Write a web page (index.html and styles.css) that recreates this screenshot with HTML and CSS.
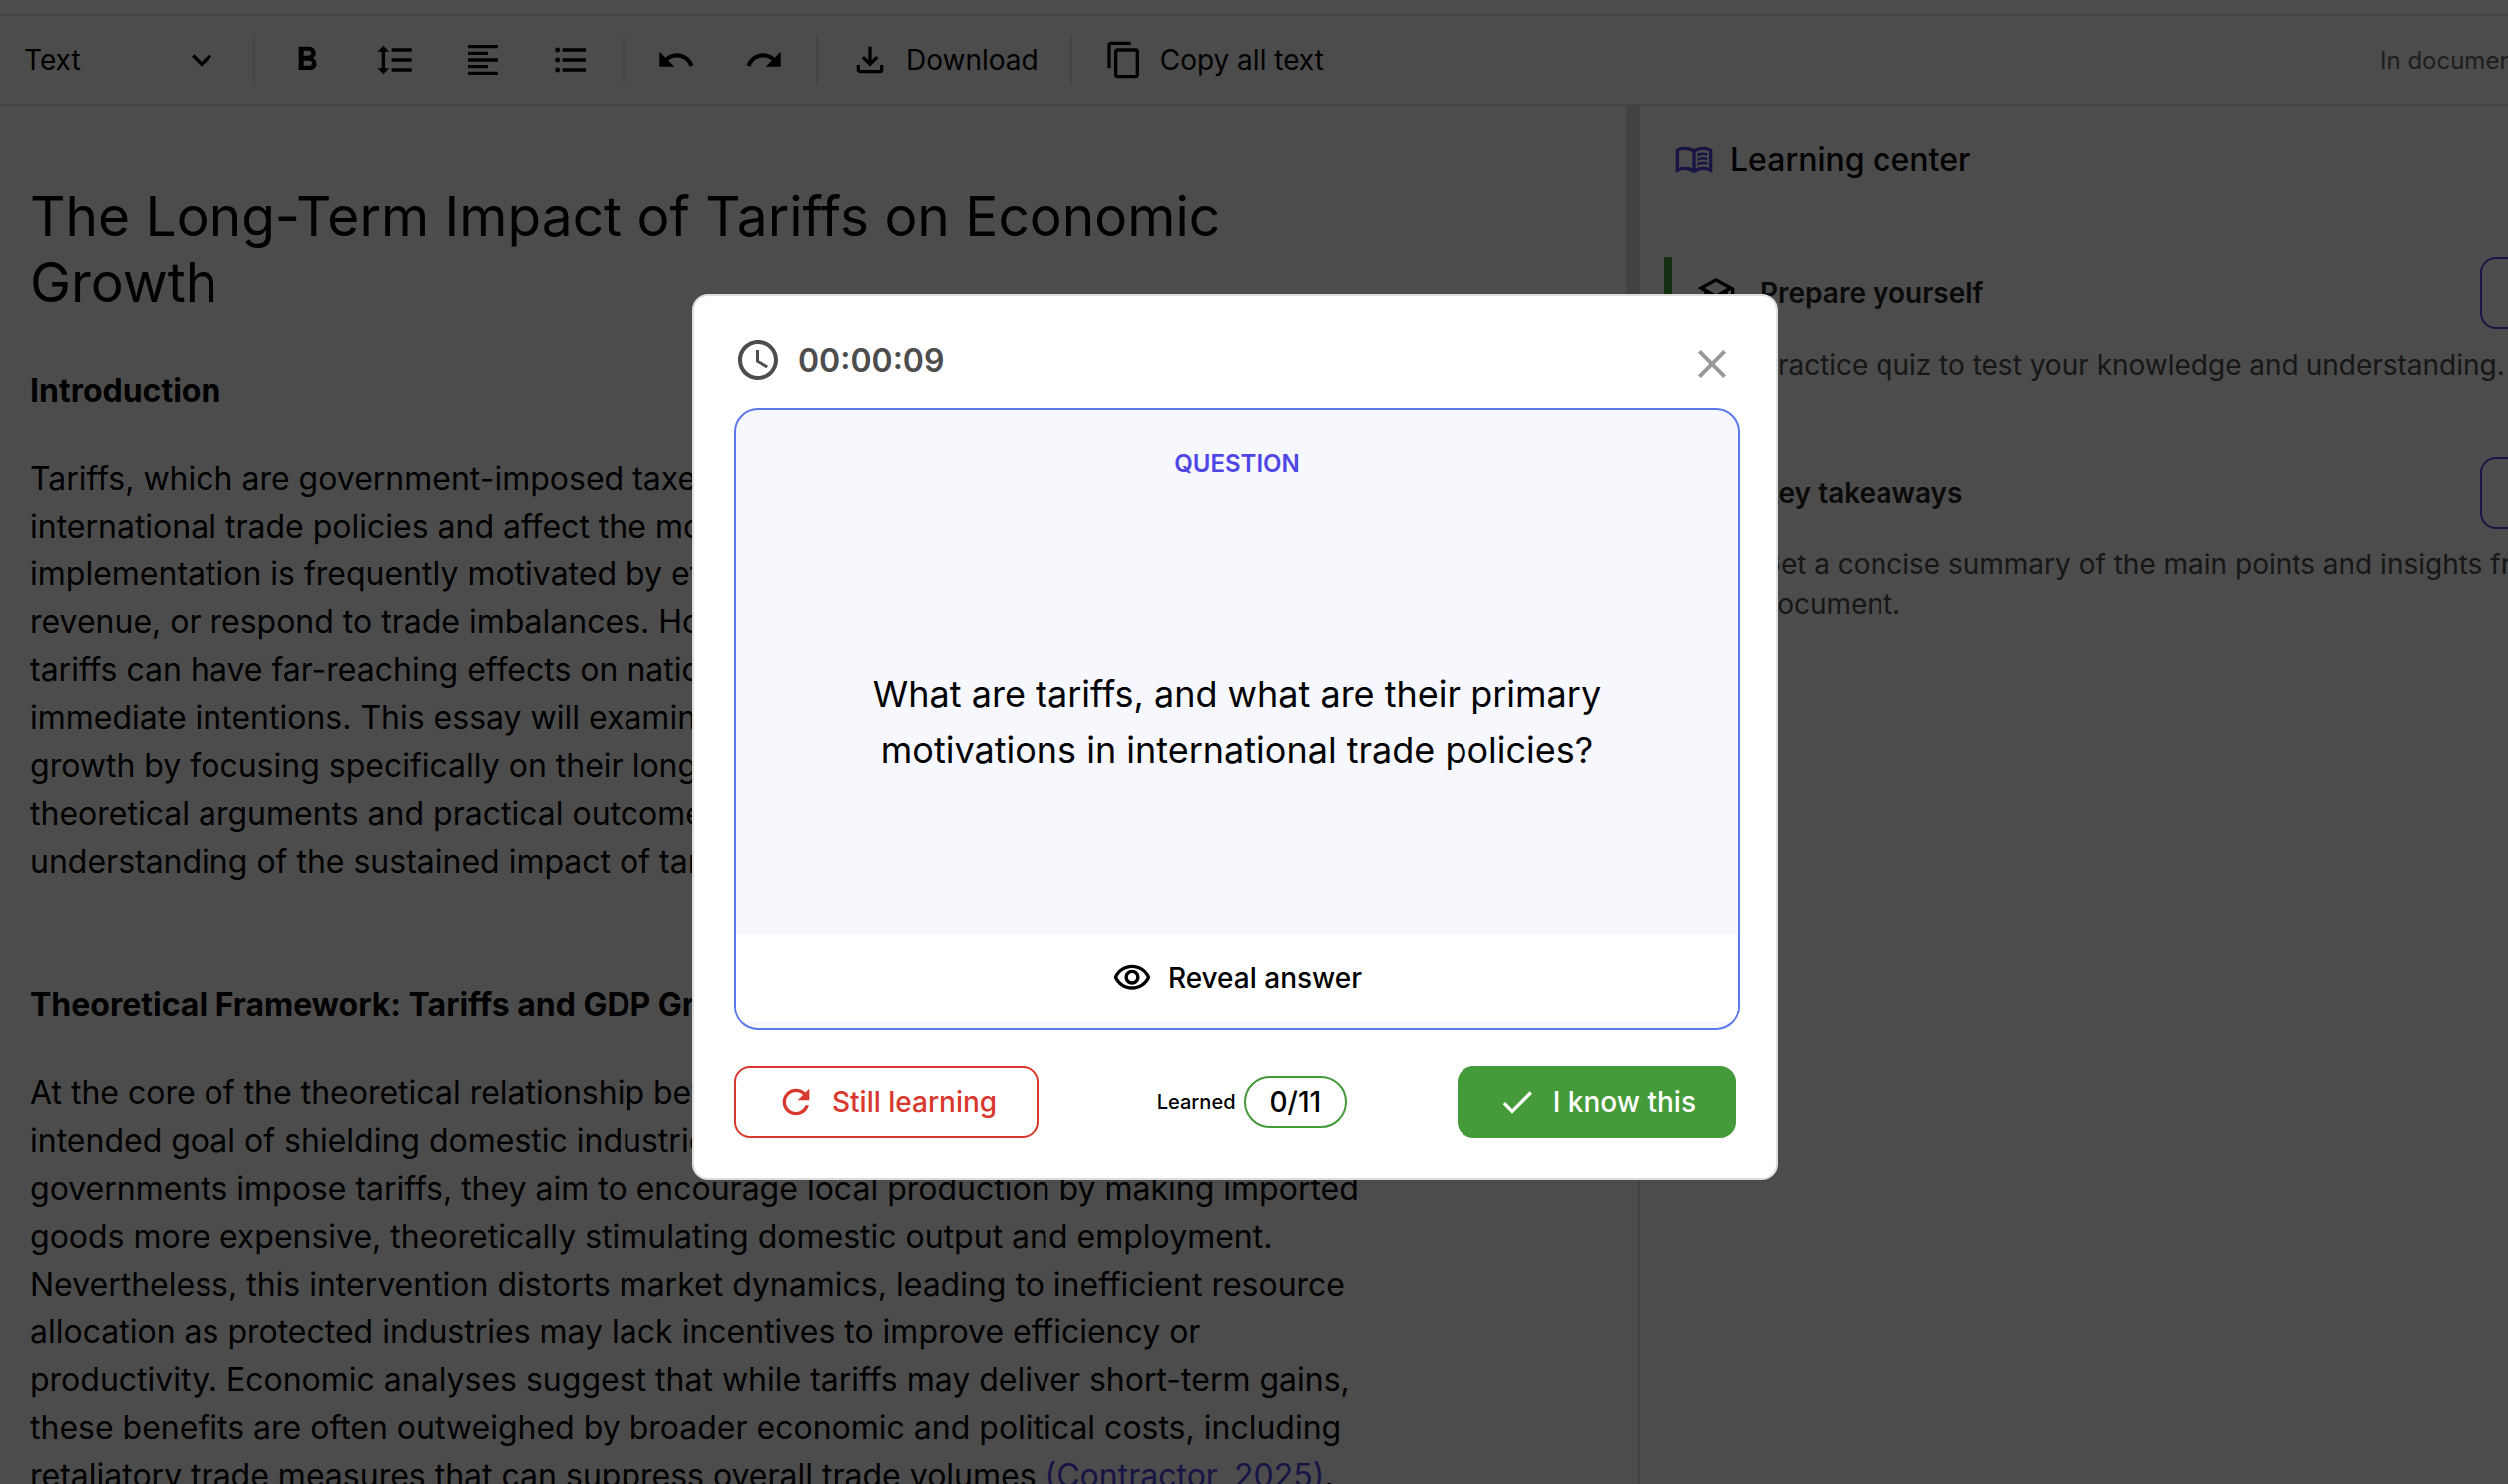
FILE: index.html
```
<!DOCTYPE html>
<html lang="en">
<head>
    <meta charset="UTF-8">
    <meta name="viewport" content="width=device-width, initial-scale=1.0">
    <title>Flashcards</title>
    <link rel="stylesheet" href="styles.css">
</head>
<body>

    <header class="toolbar">
        <div class="style-picker">
            <select aria-label="Text style">
                <option>Text</option>
                <option>Heading</option>
            </select>
            <svg class="icon" viewBox="0 0 24 24"><path d="M16.59 8.59 12 13.17 7.41 8.59 6 10l6 6 6-6z"/></svg>
        </div>
        <span class="separator"></span>
        <button class="tool" aria-label="Bold">
            <svg class="icon" viewBox="0 0 24 24"><path d="M15.6 10.79c.97-.67 1.65-1.77 1.65-2.79 0-2.26-1.75-4-4-4H7v14h7.04c2.09 0 3.71-1.7 3.71-3.79 0-1.52-.86-2.82-2.15-3.42zM10 6.5h3c.83 0 1.5.67 1.5 1.5s-.67 1.5-1.5 1.5h-3v-3zm3.5 9H10v-3h3.5c.83 0 1.5.67 1.5 1.5s-.67 1.5-1.5 1.5z"/></svg>
        </button>
        <button class="tool" aria-label="Line spacing">
            <svg class="icon" viewBox="0 0 24 24"><path d="M6 7h2.5L5 3.5 1.5 7H4v10H1.5L5 20.5 8.5 17H6V7zm4-2v2h12V5H10zm0 14h12v-2H10v2zm0-6h12v-2H10v2z"/></svg>
        </button>
        <button class="tool" aria-label="Align left">
            <svg class="icon" viewBox="0 0 24 24"><path d="M15 15H3v2h12v-2zm0-8H3v2h12V7zM3 13h18v-2H3v2zm0 8h18v-2H3v2zM3 3v2h18V3H3z"/></svg>
        </button>
        <button class="tool" aria-label="Bulleted list">
            <svg class="icon" viewBox="0 0 24 24"><path d="M4 10.5c-.83 0-1.5.67-1.5 1.5s.67 1.5 1.5 1.5 1.5-.67 1.5-1.5-.67-1.5-1.5-1.5zm0-6c-.83 0-1.5.67-1.5 1.5S3.17 7.5 4 7.5 5.5 6.83 5.5 6 4.83 4.5 4 4.5zm0 12c-.83 0-1.5.68-1.5 1.5s.68 1.5 1.5 1.5 1.5-.68 1.5-1.5-.67-1.5-1.5-1.5zM7 19h14v-2H7v2zm0-6h14v-2H7v2zm0-8v2h14V5H7z"/></svg>
        </button>
        <span class="separator"></span>
        <button class="tool" aria-label="Undo">
            <svg class="icon" viewBox="0 0 24 24"><path d="M12.5 8c-2.65 0-5.05.99-6.9 2.6L2 7v9h9l-3.62-3.62c1.39-1.16 3.16-1.88 5.12-1.88 3.54 0 6.55 2.31 7.6 5.5l2.37-.78C21.08 11.03 17.15 8 12.5 8z"/></svg>
        </button>
        <button class="tool" aria-label="Redo">
            <svg class="icon" viewBox="0 0 24 24"><path d="M18.4 10.6C16.55 8.99 14.15 8 11.5 8c-4.65 0-8.58 3.03-9.96 7.22L3.9 16c1.05-3.19 4.05-5.5 7.6-5.5 1.95 0 3.73.72 5.12 1.88L13 16h9V7l-3.6 3.6z"/></svg>
        </button>
        <span class="separator"></span>
        <button class="tool">
            <svg class="icon" viewBox="0 -960 960 960"><path d="M480-320 280-520l56-58 104 104v-326h80v326l104-104 56 58-200 200ZM240-160q-33 0-56.5-23.5T160-240v-120h80v120h480v-120h80v120q0 33-23.5 56.5T720-160H240Z"/></svg>
            Download
        </button>
        <span class="separator"></span>
        <button class="tool">
            <svg class="icon" viewBox="0 0 24 24"><path d="M16 1H4c-1.1 0-2 .9-2 2v14h2V3h12V1zm3 4H8c-1.1 0-2 .9-2 2v14c0 1.1.9 2 2 2h11c1.1 0 2-.9 2-2V7c0-1.1-.9-2-2-2zm0 16H8V7h11v14z"/></svg>
            Copy all text
        </button>
        <span class="in-document">In document</span>
    </header>

    <div class="workspace">
        <main class="document">
            <h1>The Long-Term Impact of Tariffs on Economic<br>Growth</h1>
            <h2>Introduction</h2>
            <p>
                Tariffs, which are government-imposed taxes on imported goods, shape<br>
                international trade policies and affect the movement of goods. Their<br>
                implementation is frequently motivated by efforts to protect, raise<br>
                revenue, or respond to trade imbalances. However, the outcomes of<br>
                tariffs can have far-reaching effects on national economies beyond<br>
                immediate intentions. This essay will examine tariffs and economic<br>
                growth by focusing specifically on their long-term effects through<br>
                theoretical arguments and practical outcomes, giving a broader<br>
                understanding of the sustained impact of tariffs.
            </p>
            <h2>Theoretical Framework: Tariffs and GDP Growth</h2>
            <p>
                At the core of the theoretical relationship between tariffs is the<br>
                intended goal of shielding domestic industries from competition. When<br>
                governments impose tariffs, they aim to encourage local production by making imported<br>
                goods more expensive, theoretically stimulating domestic output and employment.<br>
                Nevertheless, this intervention distorts market dynamics, leading to inefficient resource<br>
                allocation as protected industries may lack incentives to improve efficiency or<br>
                productivity. Economic analyses suggest that while tariffs may deliver short-term gains,<br>
                these benefits are often outweighed by broader economic and political costs, including<br>
                retaliatory trade measures that can suppress overall trade volumes <a href="#">(Contractor, 2025)</a>.
            </p>
        </main>
        <div class="scrollbar"><div class="thumb"></div></div>

        <aside class="sidebar">
            <h2 class="sidebar-title">
                <svg class="icon" viewBox="0 -960 960 960"><path d="M560-564v-68q33-14 67.5-21t72.5-7q26 0 51 4t49 10v64q-24-9-48.5-13.5T700-600q-38 0-73 9.5T560-564Zm0 220v-68q33-14 67.5-21t72.5-7q26 0 51 4t49 10v64q-24-9-48.5-13.5T700-380q-38 0-73 9t-67 27Zm0-110v-68q33-14 67.5-21t72.5-7q26 0 51 4t49 10v64q-24-9-48.5-13.5T700-490q-38 0-73 9.5T560-454ZM260-320q47 0 91.5 10.5T440-278v-394q-41-24-87-36t-93-12q-36 0-71.5 7T120-692v396q35-12 69.5-18t70.5-6Zm260 42q44-21 88.5-31.5T700-320q36 0 70.5 6t69.5 18v-396q-33-14-68.5-21t-71.5-7q-47 0-93 12t-87 36v394Zm-40 118q-48-38-104-59t-116-21q-60 0-116 20T40-166v-550q0-11 5.5-21T62-752q46-24 96-36t102-12q58 0 113.5 15T480-740q51-30 106.500-45T700-800q52 0 102 12t96 36q11 5 16.5 15t5.5 21v550q-48-34-104-54t-116-20q-60 0-116 21t-104 59Z"/></svg>
                Learning center
            </h2>
            <section class="lesson active">
                <div class="lesson-head">
                    <svg class="icon" viewBox="0 0 24 24"><path d="M12 3 1 9l4 2.18v6L12 21l7-3.82v-6l2-1.09V17h2V9L12 3zm6.82 6L12 12.72 5.18 9 12 5.28 18.82 9zM17 15.99l-5 2.73-5-2.73v-3.72L12 15l5-2.73v3.72z"/></svg>
                    <h3>Prepare yourself</h3>
                    <button class="start">Start</button>
                </div>
                <p>Practice quiz to test your knowledge and understanding.</p>
            </section>
            <section class="lesson">
                <div class="lesson-head">
                    <svg class="icon" viewBox="0 0 24 24"><path d="M4 5h16v2H4zm0 6h16v2H4zm0 6h10v2H4z"/></svg>
                    <h3>Key takeaways</h3>
                    <button class="start">Start</button>
                </div>
                <p>Get a concise summary of the main points and insights from your<br>document.</p>
            </section>
        </aside>
    </div>

    <div class="overlay">
        <div class="modal" role="dialog" aria-label="Flashcards">
            <div class="timer">
                <svg viewBox="0 0 24 24"><path d="M11.99 2C6.47 2 2 6.48 2 12s4.47 10 9.99 10C17.52 22 22 17.52 22 12S17.52 2 11.99 2zM12 20c-4.42 0-8-3.58-8-8s3.58-8 8-8 8 3.58 8 8-3.58 8-8 8zm.5-13H11v6l5.25 3.15.75-1.23-4.5-2.67z"/></svg>
                00:00:09
            </div>
            <button class="close" aria-label="Close">
                <svg viewBox="0 0 24 24"><path d="M19 6.41 17.59 5 12 10.59 6.41 5 5 6.41 10.59 12 5 17.59 6.41 19 12 13.41 17.59 19 19 17.59 13.41 12z"/></svg>
            </button>

            <div class="card">
                <span class="card-label">QUESTION</span>
                <p class="question">What are tariffs, and what are their primary motivations in international trade policies?</p>
                <button class="reveal">
                    <svg class="icon" viewBox="0 0 24 24"><path d="M12 6c3.79 0 7.17 2.13 8.82 5.5C19.17 14.87 15.79 17 12 17s-7.17-2.13-8.82-5.5C4.83 8.13 8.21 6 12 6m0-2C7 4 2.73 7.11 1 11.5 2.73 15.89 7 19 12 19s9.27-3.11 11-7.5C21.27 7.11 17 4 12 4zm0 5c1.38 0 2.5 1.12 2.5 2.5S13.38 14 12 14s-2.5-1.12-2.5-2.5S10.62 9 12 9m0-2c-2.48 0-4.5 2.02-4.5 4.5S9.52 16 12 16s4.5-2.02 4.5-4.5S14.48 7 12 7z"/></svg>
                    Reveal answer
                </button>
            </div>

            <div class="actions">
                <button class="btn btn-red">
                    <svg class="icon" viewBox="0 0 24 24"><path d="M17.65 6.35C16.2 4.9 14.21 4 12 4c-4.42 0-7.99 3.58-7.99 8s3.57 8 7.99 8c3.73 0 6.84-2.55 7.73-6h-2.08c-.82 2.33-3.04 4-5.65 4-3.31 0-6-2.69-6-6s2.69-6 6-6c1.66 0 3.14.69 4.22 1.78L13 11h7V4l-2.35 2.35z"/></svg>
                    Still learning
                </button>
                <div class="progress">Learned <span class="count">0/11</span></div>
                <button class="btn btn-green">
                    <svg class="icon" viewBox="0 0 24 24"><path d="M9 16.17 4.83 12l-1.42 1.41L9 19 21 7l-1.41-1.41z"/></svg>
                    I know this
                </button>
            </div>
        </div>
    </div>

</body>
</html>
```
FILE: styles.css
```
* {
    box-sizing: border-box;
}
body {
    font-family: Inter, 'Liberation Sans', sans-serif;
    margin: 0;
    padding-top: 14px;
    height: 100vh;
    overflow: hidden;
    display: flex;
    flex-direction: column;
    background-color: #fff;
    color: #000;
    font-size: 28px;
}
h1, h2, h3, p {
    margin: 0;
}
button, select {
    font: inherit;
    color: inherit;
    background: none;
    border: none;
    padding: 0;
    cursor: pointer;
}
svg {
    fill: currentColor;
    flex: none;
}
.icon {
    width: 40px;
    height: 40px;
}

/* toolbar */
.toolbar {
    display: flex;
    align-items: center;
    flex: none;
    height: 92px;
    padding-left: 24px;
    border-top: 2px solid #e3e3e3;
    border-bottom: 2px solid #e3e3e3;
    white-space: nowrap;
    overflow: hidden;
}
.style-picker {
    display: flex;
    align-items: center;
    width: 222px;
    padding-right: 24px;
}
.style-picker select {
    appearance: none;
    flex: 1;
}
.separator {
    width: 2px;
    height: 48px;
    margin: 0 8px;
    background-color: #e3e3e3;
}
.tool {
    display: flex;
    align-items: center;
    gap: 16px;
    padding: 0 24px;
    height: 88px;
}
.in-document {
    width: 128px;
    margin-left: auto;
    font-size: 24px;
    color: #666;
}

/* document and side panel */
.workspace {
    display: flex;
    flex: 1;
    min-height: 0;
}
.document {
    flex: 1;
    padding: 78px 30px 0;
    font-size: 32px;
    line-height: 48px;
    overflow: hidden;
    white-space: nowrap;
}
.document h1 {
    font-size: 55px;
    font-weight: 400;
    line-height: 66px;
    margin-bottom: 52px;
}
.document h2 {
    font-size: 32px;
    font-weight: 700;
    margin-bottom: 40px;
}
.document p {
    margin-bottom: 96px;
}
.document a {
    color: #4f46e5;
    text-decoration: none;
}
.scrollbar {
    width: 12px;
}
.thumb {
    height: 50%;
    background-color: #dcdcdc;
}
.sidebar {
    width: 872px;
    padding-left: 24px;
    border-left: 2px solid #dcdcdc;
    overflow: hidden;
    white-space: nowrap;
}
.sidebar-title {
    display: flex;
    align-items: center;
    gap: 16px;
    margin: 34px 0 78px 10px;
    font-size: 32px;
    font-weight: 500;
    line-height: 40px;
}
.sidebar-title .icon {
    color: #4f46e5;
}
.lesson {
    border-left: 8px solid transparent;
    padding-left: 24px;
    margin-bottom: 72px;
}
.lesson.active {
    border-color: #459a3a;
}
.lesson-head {
    display: flex;
    align-items: center;
    gap: 24px;
}
.lesson h3 {
    flex: none;
    width: 698px;
    font-size: 28px;
    font-weight: 600;
    color: #222;
}
.start {
    flex: none;
    width: 160px;
    height: 72px;
    border: 2px solid #4f46e5;
    border-radius: 16px;
    color: #4f46e5;
}
.lesson p {
    padding-left: 64px;
    margin-top: 16px;
    line-height: 40px;
    color: #4d4d4d;
}

/* flashcard dialog */
.overlay {
    position: fixed;
    inset: 0;
    display: flex;
    align-items: center;
    justify-content: center;
    padding: 0 38px 10px 0;
    background-color: rgba(0, 0, 0, 0.7);
}
.modal {
    position: relative;
    width: 1088px;
    padding: 40px;
    border: 2px solid #ddd;
    border-radius: 16px;
    background-color: #fff;
}
.timer {
    display: flex;
    align-items: center;
    gap: 16px;
    margin-bottom: 24px;
    font-size: 32px;
    font-weight: 600;
    color: #4d4d4d;
}
.timer svg, .close svg {
    display: block;
    width: 48px;
    height: 48px;
}
.close {
    position: absolute;
    top: 44px;
    right: 40px;
    color: #999;
}
.card {
    box-sizing: content-box;
    display: flex;
    flex-direction: column;
    align-items: center;
    width: 100%;
    height: 620px;
    border: 2px solid #5b78ea;
    border-radius: 24px;
    background-color: #f6f8fe;
    overflow: hidden;
}
.card-label {
    margin-top: 38px;
    font-size: 24px;
    font-weight: 600;
    line-height: 32px;
    color: #4f46e5;
}
.question {
    display: flex;
    align-items: center;
    flex: 1;
    width: 800px;
    padding-top: 30px;
    font-size: 36px;
    line-height: 56px;
    text-align: center;
}
.reveal {
    display: flex;
    align-items: center;
    justify-content: center;
    gap: 16px;
    width: 100%;
    height: 88px;
    margin-bottom: 6px;
    background-color: #fff;
    font-weight: 500;
}
.actions {
    display: flex;
    align-items: center;
    justify-content: space-between;
    margin-top: 36px;
}
.btn {
    display: flex;
    align-items: center;
    gap: 16px;
    height: 72px;
    padding: 0 40px;
    border-radius: 16px;
    font-weight: 500;
}
.btn-red {
    border: 2px solid #d8382d;
    color: #d8382d;
}
.btn-green {
    background-color: #459a3a;
    color: #fff;
}
.progress {
    display: flex;
    align-items: center;
    gap: 8px;
    padding-left: 8px;
    font-size: 20px;
    font-weight: 500;
}
.count {
    padding: 0 24px;
    border: 2px solid #459a3a;
    border-radius: 26px;
    font-size: 28px;
    line-height: 48px;
}
```
